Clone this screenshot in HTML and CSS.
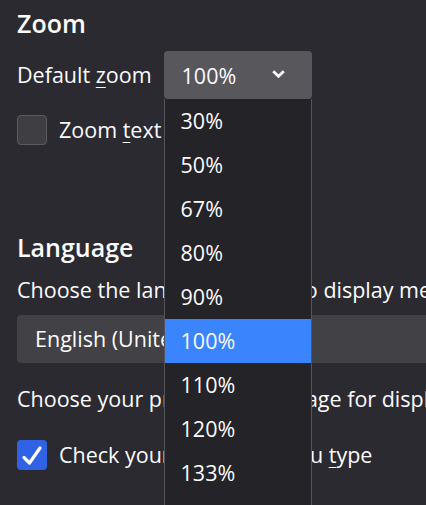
FILE: index.html
```html
<!DOCTYPE html>
<html>
<head>
<meta charset="utf-8">
<link rel="stylesheet" href="styles.css">
</head>
<body>
<div class="page">
  <section class="zoom">
    <h2 class="heading">Zoom</h2>
    <div class="zoom-row">
      <span class="label">Default <u>z</u>oom</span>
      <div class="select-wrap">
        <div class="select">
          <span>100%</span>
          <svg class="chev" width="13" height="8" viewBox="0 0 13 8"><path d="M1.2 1.2 L6.5 6.3 L11.8 1.2" fill="none" stroke="#fbfbfe" stroke-width="2.8"/></svg>
        </div>
        <ul class="menu">
          <li>30%</li>
          <li>50%</li>
          <li>67%</li>
          <li>80%</li>
          <li>90%</li>
          <li class="active">100%</li>
          <li>110%</li>
          <li>120%</li>
          <li>133%</li>
        </ul>
      </div>
    </div>
    <label class="check-row">
      <span class="box"></span>
      <span class="label">Zoom <u>t</u>ext only</span>
    </label>
  </section>
  <section class="language">
    <h2 class="heading">Language</h2>
    <p class="text">Choose the languages used to display menus, messages, and notifications from Firefox.</p>
    <div class="lang-select">English (United States)</div>
    <p class="text text2">Choose your preferred language for displaying pages</p>
    <label class="check-row check2">
      <span class="box checked">
        <svg width="30" height="30" viewBox="0 0 30 30"><path d="M7 17.5 L12.5 23 L23 8" fill="none" stroke="#ffffff" stroke-width="3.2" stroke-linecap="round" stroke-linejoin="round"/></svg>
      </span>
      <span class="label">Check your spelling as you <u>t</u>ype</span>
    </label>
  </section>
</div>
</body>
</html>
```
FILE: styles.css
```css
html, body {
  margin: 0;
  padding: 0;
  background: #2b2a30;
}
body {
  width: 426px;
  height: 505px;
  overflow: hidden;
}
.page {
  padding: 0 0 0 17px;
  font-family: "Open Sans", "Noto Sans", sans-serif;
  color: #fbfbfe;
  white-space: nowrap;
}
.heading {
  margin: 0;
  font-size: 25px;
  font-weight: 600;
  line-height: 34px;
}
.zoom .heading {
  padding-top: 6px;
}
.label, .text {
  font-size: 21.5px;
  line-height: 28px;
}
u {
  text-decoration-thickness: 1px;
  text-underline-offset: 4px;
}
.zoom-row {
  display: flex;
  align-items: center;
  gap: 12px;
  margin-top: 11px;
}
.select-wrap {
  position: relative;
}
.select {
  width: 148px;
  height: 48px;
  box-sizing: border-box;
  background: #58575c;
  border-radius: 4px;
  display: flex;
  align-items: center;
  justify-content: space-between;
  padding: 0 27px 0 18px;
  font-size: 21.5px;
}
.chev {
  display: block;
  margin-top: -2px;
}
.menu {
  position: absolute;
  left: 0;
  top: 48px;
  width: 148px;
  height: 430px;
  box-sizing: border-box;
  margin: 0;
  padding: 0;
  list-style: none;
  background: #242327;
  border-left: 1px solid #56555a;
  border-right: 1px solid #56555a;
  z-index: 5;
}
.menu li {
  height: 44px;
  line-height: 44px;
  padding-left: 16px;
  font-size: 21.5px;
}
.menu li.active {
  background: #3a85fd;
}
.check-row {
  display: flex;
  align-items: center;
  gap: 12px;
  margin-top: 16px;
}
.box {
  flex: none;
  width: 30px;
  height: 30px;
  box-sizing: border-box;
  border-radius: 4px;
  background: #3f3e43;
  border: 1px solid #5b5a60;
  display: flex;
  align-items: center;
  justify-content: center;
}
.box.checked {
  background: #2f62e4;
  border: none;
}
.box svg {
  display: block;
}
.language {
  margin-top: 85px;
}
.text {
  margin: 12px 0 0;
}
.lang-select {
  margin-top: 11px;
  height: 48px;
  line-height: 48px;
  background: #424145;
  border-radius: 4px 0 0 4px;
  padding-left: 18px;
  font-size: 21.5px;
}
.text2 {
  margin-top: 22px;
}
.check2 {
  margin-top: 27px;
}
```
